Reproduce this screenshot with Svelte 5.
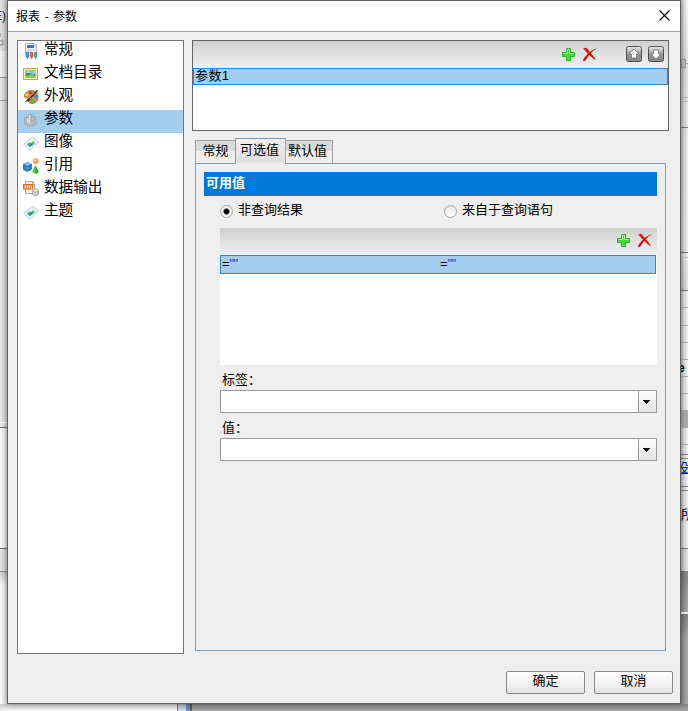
<script>
  const nav = [
    ['常规', 'report'], ['文档目录', 'toc'], ['外观', 'palette'], ['参数', 'gear'],
    ['图像', 'layers'], ['引用', 'shapes'], ['数据输出', 'xml'], ['主题', 'layers']
  ];
  const leftLines = [
    [77, '#8d8d8d', 1], [100, '#9a9a9a', 1], [422, '#f4f4f4', 1], [427, '#66696f', 1],
    [548, '#666b78', 1], [571, '#8a8a8a', 1]
  ];
  const rightLines = [
    [63, '#aaa', 1], [97, '#bbb', 1], [101, '#bbb', 1], [127, '#777', 1], [252, '#6e7177', 1],
    [257, '#c5c5c5', 1], [290, '#777', 1], [307, '#aaa', 1], [325, '#aaa', 1], [342, '#aaa', 1],
    [359, '#aaa', 1], [376, '#aaa', 1], [393, '#aaa', 1], [410, '#a8a8a8', 18], [444, '#aaa', 1],
    [454, '#777', 1], [458, '#888', 1], [486, '#777', 1], [490, '#777', 1], [548, '#777', 1],
    [612, '#eeeeee', 2]
  ];
</script>

{#snippet plus()}
  <svg width="13" height="13" viewBox="0 0 13 13">
    <path d="M4.5.5h4v4h4v4h-4v4h-4v-4h-4v-4h4z" fill="#45df35" stroke="#2ab52a" />
    <path d="M5.5 5.5v-4h2v4h4M1.5 5.5h4" fill="none" stroke="#a5f58f" />
  </svg>
{/snippet}

{#snippet cross()}
  <svg width="14" height="15" viewBox="0 0 14 15">
    <path d="M.2 1.6C2 .2 3.3.5 4 1.5L12.7 12l-.5.9C8 10.5 4.5 6.5.2 1.6z" fill="#e51610" />
    <path d="M13.7 1.6C9 3.8 5.9 8 2.5 13.3L.3 14.6l-.1-2.2C4 7.5 8.3 2.5 13.7 1.6z" fill="#d20808" />
  </svg>
{/snippet}

{#snippet arrow(down)}
  <svg width="16" height="16" viewBox="0 0 16 16">
    <defs>
      <linearGradient id="metal" x2="0" y2="1">
        <stop stop-color="#eee" /><stop offset=".5" stop-color="#999" /><stop offset="1" stop-color="#858585" />
      </linearGradient>
    </defs>
    <rect x=".5" y=".5" width="15" height="15" rx="2" fill="url(#metal)" stroke="#505050" />
    <path d="M8 3l5 5h-2.5v4h-5V8H3z" fill="#fff" stroke="#666" stroke-width=".7" transform={down ? 'rotate(180 8 8)' : undefined} />
  </svg>
{/snippet}

{#snippet icon(name)}
  <svg width="16" height="16" viewBox="0 0 16 16">
    {#if name === 'report'}
      <path d="M2.5.5h9l2 2v10h-11z" fill="#f6f9fd" stroke="#a4b2c3" />
      <path d="M4 2h7v3H4z" fill="#2f78bd" /><path d="M11 1v2h2M4 7h8M4 9h4" fill="none" stroke="#a9bbcc" />
      <path d="M3 9h3v5l-1.5 2L3 14z" fill="#2a85d5" /><path d="M7 9h3v5l-1.5 2L7 14z" fill="#df4931" />
      <path d="M11 9h3v5l-1.5 2-1.5-2z" fill="#25a474" />
      <path d="M4 10v4M8 10v4M12 10v4" stroke="#fff" stroke-opacity=".45" stroke-width=".7" />
    {:else if name === 'toc'}
      <path d="M.5 2.5h14v11H.5z" fill="#fff6bd" stroke="#c5a63f" />
      <path d="M2.5 4.5h10v7h-10z" fill="#61c0ed" stroke="#c9b567" />
      <path d="M3 8q2-2 4.5 0T12 8v3H3z" fill="#268937" /><path d="M3 10q4-3 9 0v1H3z" fill="#79c95a" />
      <path d="M4 6h3" stroke="#fff" /><circle cx="11" cy="6" r="1" fill="#ffe75a" />
    {:else if name === 'palette'}
      <path d="M1.2 7C2 2.8 6 1 10 1.6 15 2.3 16 7 14.4 11c-1.7 4-6.2 4.7-8.6 2.2-1.4-1.5.6-3-1-4C3.2 8.4.9 9.3 1.2 7z" fill="#c58d58" stroke="#96683a" stroke-width=".7" />
      <circle cx="7.5" cy="3.8" r="1.7" fill="#ef3726" /><circle cx="4" cy="5.7" r="1.5" fill="#ffd24b" />
      <circle cx="12.8" cy="7.3" r="1.5" fill="#258de1" /><circle cx="9.8" cy="12" r="1.9" fill="#51c735" />
      <path d="M14.5 1.2L6 10.5" stroke="#26313d" stroke-width="1.3" /><path d="M7 8L2 13l4-1 2.5-2.5z" fill="#363034" />
      <path d="M6.5 8.5l1.5 1.4" stroke="#e6d4bb" />
    {:else if name === 'gear'}
      <path d="M6 2.5h3v2l1.7.8 1.3-.8 1 2-.7 1.2 1.3 2-1 2.5-1.8.3-.8 1.5H8.5L7.5 15l-1-1H4.8L4 12.5l-2-.2-1-2.5 1-1.5-.6-1.5 1-1.8 1.6.7L6 4.8z" fill="#bcbdbe" stroke="#96999b" stroke-width=".8" />
      <ellipse cx="7.2" cy="8.5" rx="3.5" ry="4" fill="#cecfcf" stroke="#a2a2a2" stroke-width=".6" />
      <path d="M6.8 3v7M4.8 7v3" stroke="#f3f3f3" /><path d="M8 4v7M10 7v3" stroke="#8a8c8e" stroke-width=".8" />
    {:else if name === 'layers'}
      <path d="M.7 9.2L9.6 2.4l6 4.3-8.9 8.2z" fill="#edf7fd" stroke="#79b3df" stroke-width=".9" stroke-dasharray="1.8 .6" />
      <path d="M3.2 9.2l6.2-4.8 3.9 2.6-6.5 5.5z" fill="#bfe8f8" />
      <path d="M3.8 9.3l2.5-1.8 1.3.8 2.2-1.6 2.3 1.2-5.3 4.3z" fill="#58b850" />
      <path d="M6.3 10l2.3-1.5 1.8.8-3.2 2z" fill="#2a79ad" /><path d="M7 6.9l2-1.3" stroke="#fff" />
      <circle cx="10.6" cy="6" r=".9" fill="#ffe95a" />
    {:else if name === 'shapes'}
      <path d="M0 6l4.7-2L9 6v5.2L4.5 14 0 11.5z" fill="#2778b9" /><path d="M0 6l4.7-2L9 6 4.5 8z" fill="#7abfe6" />
      <path d="M4.5 8v6M0 9l4.5 2L9 9" fill="none" stroke="#4ca5dc" stroke-width=".8" />
      <circle cx="12.7" cy="3" r="3" fill="#f6a256" /><circle cx="12" cy="2.2" r="1.2" fill="#ffdbaa" />
      <path d="M12.3 7l3.4 7q-3.2 3-6.6 0z" fill="#4fd34a" /><path d="M12.3 7v8.5q2 0 3.4-1.5z" fill="#2aa83a" />
    {:else}
      <path d="M2.5.5h7l2 2v10h-9z" fill="#f1f1f1" stroke="#a2a6a8" /><path d="M9.5.5v3h2" fill="none" stroke="#9da2a5" />
      <rect y="3" width="10" height="5.5" fill="#e86718" />
      <path d="M1.4 4.3l2 3m0-3l-2 3M4.3 7.3v-3l1.2 2 1.2-2v3M8 4.3v3h1.5" fill="none" stroke="#fff" stroke-width=".8" />
      <path d="M9.5 9.5v4q3 3 6 0v-4z" fill="#c6cacc" stroke="#999fa3" stroke-width=".8" />
      <ellipse cx="12.5" cy="9.6" rx="3" ry="1.5" fill="#eceeef" stroke="#959b9f" stroke-width=".8" />
      <path d="M11 11.3v2" stroke="#eee" />
    {/if}
  </svg>
{/snippet}

{#snippet combo(label)}
  <div class="label">{label}</div>
  <div class="combo"><span></span><button aria-label={label}><svg width="7" height="4" viewBox="0 0 7 4"><path d="M0 0h7v1H6v1H5v1H4v1H3V3H2V2H1V1H0z" /></svg></button></div>
{/snippet}

<main>
  <div class="behind left">
    {#each leftLines as [y, color, height]}<i style="top:{y}px;background:{color};height:{height}px"></i>{/each}
    <span class="edge-text">E)</span>
    <svg class="edge-icon" width="6" height="16" viewBox="0 0 6 16"><path d="M0 6V2M0 10c4-3 5 5 0 4" fill="none" stroke="#a0a0a0" stroke-width="1.5" /></svg>
  </div>
  <div class="behind right">
    {#each rightLines as [y, color, height]}<i style="top:{y}px;background:{color};height:{height}px"></i>{/each}
    <b class="knob"></b><span class="e">e</span><span class="link">设</span><span class="so">所</span>
  </div>
  <div class="behind bottom"></div>

  <section class="dialog">
    <header><span>报表 - 参数</span><svg width="11" height="11" viewBox="0 0 11 11"><path d="M.5.5l10 10m0-10l-10 10" stroke="#000" stroke-width="1.1" fill="none" /></svg></header>
    <div class="body">
      <nav>
        {#each nav as [name, kind], i}
          <div class="item" class:selected={i === 3}>{@render icon(kind)}<span>{name}</span></div>
        {/each}
      </nav>
      <div class="content">
        <div class="params">
          <div class="toolbar top">{@render plus()}{@render cross()}<span class="moves">{@render arrow(false)}{@render arrow(true)}</span></div>
          <div class="row param">参数1</div>
        </div>
        <div class="tabs"><div class="tab">常规</div><div class="tab active">可选值</div><div class="tab third">默认值</div></div>
        <div class="panel">
          <h2>可用值</h2>
          <div class="radios">
            <label><span class="radio on"></span>非查询结果</label>
            <label><span class="radio"></span>来自于查询语句</label>
          </div>
          <div class="values">
            <div class="toolbar">{@render plus()}{@render cross()}</div>
            <div class="row expr"><span>=<em>""</em></span><span>=<em>""</em></span></div>
          </div>
          {@render combo('标签：')}
          {@render combo('值：')}
        </div>
      </div>
    </div>
    <footer><button>确定</button><button>取消</button></footer>
  </section>
</main>

<style>
  :global(body) { margin: 0; }
  * { box-sizing: border-box; }
  svg { display: block; flex: none; }
  main { position: relative; width: 688px; height: 711px; overflow: hidden; background: #eee; font: 13px/16px "Liberation Sans", "Noto Sans CJK SC", sans-serif; color: #000; }
  .behind { position: absolute; overflow: hidden; }
  .behind i, .behind span, .knob { position: absolute; }
  .behind i { left: 0; right: 0; }
  .left { left: 0; top: 0; width: 7px; height: 711px; background: linear-gradient(90deg, transparent, #0002), linear-gradient(#e2e2e2 0 51px, #f2f2f2 51px 77px, #e8e8e8 77px 422px, #eee 422px 427px, #fafafa 427px 548px, #e4e4e4 548px 571px, #d0d0d0 572px, #fafafa 585px); }
  .right { right: 0; top: 0; width: 7px; height: 711px; background: linear-gradient(90deg, #0003, transparent), linear-gradient(#fafafa 0, #e5e5e5 63px, #eee 127px, #f0f0f0 252px, #e2e2e2 290px, #f2f2f2 291px 548px, #e6e6e6 548px 571px, #8a8a8a 571px, #aaa 612px, #858585 614px, #aaa 640px); }
  .bottom { left: 0; right: 0; top: 704px; height: 7px; background: linear-gradient(#0003, transparent), linear-gradient(90deg, #f8f8f8 0 177px, #777 177px 178px, #cfdde8 178px 186px, #7195c3 186px 190px, #666 190px 192px, #a5a5a5 192px); }
  .edge-text { right: 1px; top: 8px; font-size: 12px; color: #123; }
  .edge-icon { position: absolute; left: 0; top: 31px; }
  .knob { left: 0; top: 59px; width: 5px; height: 9px; background: #bbb; border: 1px solid #999; }
  .e { left: -3px; top: 360px; font-weight: bold; font-size: 12px; }
  .link { left: -5px; top: 460px; color: #00f; text-decoration: underline; }
  .so { left: 0; top: 507px; }

  .dialog { position: absolute; left: 7px; top: 0; width: 674px; height: 704px; border: 1px solid #606060; background: #efefef; display: flex; flex-direction: column; box-shadow: 0 0 5px #0006; }
  header { height: 31px; background: #fff; border-bottom: 1px solid #a0a0a0; display: flex; align-items: center; justify-content: space-between; padding: 0 10px 0 8px; font-size: 12px; }
  header span { font-family: "Noto Sans CJK SC", sans-serif; word-spacing: 1.7px; margin-top: -1px; }
  header svg { margin-top: -2px; }
  .body { height: 614px; margin: 8px 11px 0 9px; display: flex; justify-content: space-between; }
  nav { width: 167px; height: 614px; border: 1px solid #747474; background: #fff; }
  .item { height: 23px; display: flex; padding: 2px 0 0 5px; gap: 5px; font-size: 14.6px; line-height: 16px; }
  .item span { margin-top: -2px; }
  .selected { background: #a4cef0; }
  .content { width: 477px; }
  .params { height: 91px; border: 1px solid #646464; background: #fff; }
  .toolbar { height: 27px; display: flex; align-items: center; justify-content: flex-end; gap: 8px; padding-right: 5px; background: linear-gradient(#d0d0d0, #f0f0f0); }
  .top { padding: 0 4px 1px 0; }
  .moves { display: flex; gap: 6px; margin-left: 21px; }
  .row { border: 1px solid #2c87d4; background: #a4cef0; }
  .param { height: 17px; padding-left: 1px; line-height: 14px; letter-spacing: .4px; }
  .tabs { height: 26px; margin: 7px 0 0 3px; display: flex; align-items: flex-end; position: relative; }
  .tab { width: 41px; height: 23px; margin-bottom: 1px; border: 1px solid #a0a0a0; border-bottom: 0; background: linear-gradient(#dadada 0 45%, #efefef 46%); text-align: center; line-height: 19px; }
  .tab.active { width: 51px; height: 26px; margin: 0 0 0 -1px; border-color: #799ab9; background: linear-gradient(#f0f0f0, #dfdfdf 90%, #eee); line-height: 21px; padding-right: 2px; }
  .tab.third { width: 48px; margin-left: -1px; text-align: left; padding-left: 2px; }
  .panel { width: 471px; height: 488px; margin: -1px 0 0 3px; border: 1px solid #7e9dbb; padding: 8px; }
  h2 { margin: 0; height: 24px; padding-left: 2px; font-size: 13px; line-height: 21px; color: #fff; background: #0078d7; }
  .radios { display: flex; margin-left: 16px; height: 32px; }
  .radios label { width: 224px; flex: none; display: flex; padding-top: 6px; }
  .radios label + label { width: 200px; }
  .radio { width: 13px; height: 13px; margin: 3px 5px 0 0; border: 1px solid #a3a3a3; border-radius: 50%; background: linear-gradient(#e8e8e8, #fff); flex: none; }
  .radio.on { background: radial-gradient(circle, #000 0 2px, #777 3px, #f5f5f5 3.5px); }
  .values { height: 137px; margin-left: 16px; background: #fff; }
  .values .toolbar { padding: 0 5px 2px 0; }
  .expr { width: 436px; height: 19px; display: flex; padding-left: 1px; line-height: 15px; }
  .expr span { width: 218px; flex: none; }
  .expr span + span { width: 200px; }
  em { font-style: normal; color: #0048c8; letter-spacing: -.7px; }
  .label { height: 25px; padding: 7px 0 0 18px; }
  .combo { height: 23px; margin-left: 16px; border: 1px solid #999; background: #fff; display: flex; justify-content: space-between; }
  .combo button { width: 18px; border: 0; border-left: 1px solid #999; padding: 1px 0 0 4px; background: linear-gradient(#fff, #e3e3e3); }
  footer { display: flex; justify-content: flex-end; gap: 9px; margin: 17px 7px 0 0; }
  footer button { width: 79px; height: 23px; padding: 0 0 3px; border: 1px solid #888; border-radius: 2px; background: linear-gradient(#fff, #f2f2f2 55%, #e3e3e3); font: inherit; }
</style>
